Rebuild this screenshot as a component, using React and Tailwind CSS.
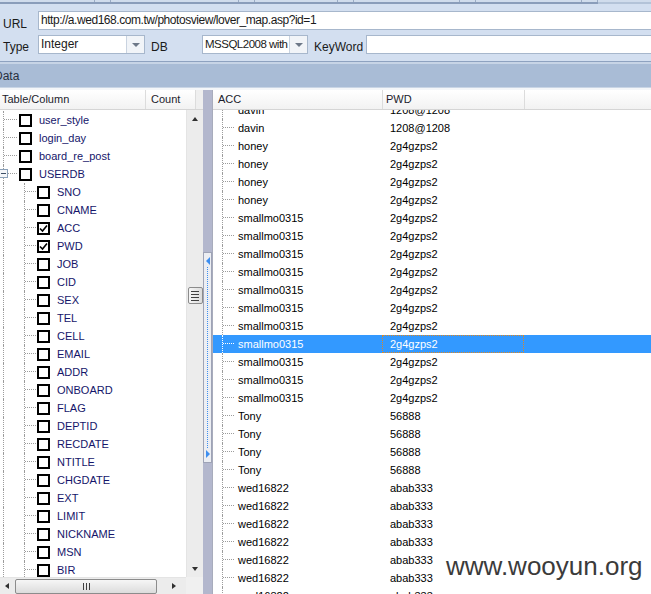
import React from 'react';

const USERDB_COLUMNS = [
    'SNO', 'CNAME', 'ACC', 'PWD', 'JOB', 'CID', 'SEX', 'TEL', 'CELL', 'EMAIL', 'ADDR',
    'ONBOARD', 'FLAG', 'DEPTID', 'RECDATE', 'NTITLE', 'CHGDATE', 'EXT', 'LIMIT',
    'NICKNAME', 'MSN', 'BIR'
];
const CHECKED = ['ACC', 'PWD'];

const ROWS = [
    ['davin', '1208@1208'],
    ['davin', '1208@1208'],
    ...Array(4).fill(['honey', '2g4gzps2']),
    ...Array(11).fill(['smallmo0315', '2g4gzps2']),
    ...Array(4).fill(['Tony', '56888']),
    ...Array(7).fill(['wed16822', 'abab333'])
];
const SELECTED = 13;

function Checkbox({ checked }) {
    return (
        <div className="flex h-[13px] w-[13px] items-center justify-center border-2 border-black bg-white">
            {checked && (
                <svg width="9" height="9" viewBox="0 0 9 9">
                    <path d="M1 4.5 L3.5 7 L8 1.5" fill="none" stroke="#000" strokeWidth="1.6" />
                </svg>
            )}
        </div>
    );
}

function Dropdown({ value, className, tight }) {
    return (
        <div className={`flex h-[19px] border border-[#a7b7cc] bg-white ${className}`}>
            <div
                className={`flex-1 overflow-hidden whitespace-nowrap pl-[2px] leading-[17px] ${
                    tight ? 'text-[11.5px] tracking-[-0.5px]' : ''
                }`}
            >
                {value}
            </div>
            <div className="flex w-[18px] items-center justify-center border-l border-[#c9d3e0] bg-[#f1f4f8]">
                <span className="h-0 w-0 border-x-[4px] border-t-[4px] border-x-transparent border-t-[#6d7888]" />
            </div>
        </div>
    );
}

function TopRow({ label, checked, expander }) {
    return (
        <div className="flex h-[18px]">
            <div className="w-[3px]" />
            <div className="relative w-[14px] border-l border-dotted border-[#9c9c9c]">
                <div className="h-[9px] border-b border-dotted border-[#9c9c9c]" />
                {expander && (
                    <div className="absolute -left-[5px] top-[4px] flex h-[9px] w-[9px] items-center justify-center border border-[#8aa0b8] bg-[#f4f6f9]">
                        <div className="h-px w-[5px] bg-[#3d4f66]" />
                    </div>
                )}
            </div>
            <div className="flex items-center pl-[2px]">
                <Checkbox checked={checked} />
            </div>
            <span className="ml-[7px] self-center">{label}</span>
        </div>
    );
}

function ChildRow({ label }) {
    return (
        <div className="flex h-[18px]">
            <div className="w-[3px]" />
            <div className="w-[21px] border-l border-dotted border-[#9c9c9c]" />
            <div className="w-[12px] border-l border-dotted border-[#9c9c9c]">
                <div className="h-[9px] border-b border-dotted border-[#9c9c9c]" />
            </div>
            <div className="flex items-center pl-px">
                <Checkbox checked={CHECKED.includes(label)} />
            </div>
            <span className="ml-[7px] self-center">{label}</span>
        </div>
    );
}

function GridRow({ acc, pwd, selected }) {
    const line = selected ? 'border-white' : 'border-[#9c9c9c]';
    return (
        <div className={`flex h-[18px] ${selected ? 'bg-[#3399ff] text-white' : 'text-black'}`}>
            <div className="w-[9px]" />
            <div className={`w-[12px] border-l border-dotted ${line}`}>
                <div className={`h-[9px] border-b border-dotted ${line}`} />
            </div>
            <div className="flex w-[148px] items-center pl-[4px]">{acc}</div>
            <div
                className={`flex w-[142px] items-center pl-[7px] ${
                    selected ? 'border border-dotted border-[#e0871f]' : 'border border-transparent'
                }`}
            >
                {pwd}
            </div>
        </div>
    );
}

export default function App() {
    return (
        <div className="relative flex h-[594px] w-[651px] flex-col overflow-hidden bg-white font-['Liberation_Sans',Arial,sans-serif] text-[12px] text-[#1a1a1a]">
            {/* window strip */}
            <div className="flex h-[2px] bg-[#d0dcec]">
                <div className="w-[95px] border-r border-[#9aabc4]" />
                <div className="w-[16px] border-r border-[#9aabc4]" />
                <div className="w-[128px] border-r border-[#9aabc4]" />
                <div className="w-[16px] border-r border-[#9aabc4]" />
                <div className="w-[83px] border-r border-[#9aabc4]" />
                <div className="w-[16px] border-r border-[#9aabc4]" />
                <div className="w-[106px] border-r border-[#9aabc4]" />
                <div className="w-[16px] border-r border-[#9aabc4]" />
                <div className="w-[106px] border-r border-[#9aabc4]" />
                <div className="w-[16px] border-r border-[#9aabc4]" />
            </div>
            <div className="flex h-[2px]">
                <div className="w-[598px] bg-[#8a9dba]" />
                <div className="flex-1 bg-[#b3c3d8]" />
            </div>

            {/* connection panel */}
            <div className="flex flex-col gap-[5px] bg-[#d3dff0] px-[3px] pb-[7px] pt-[7px]">
                <div className="flex h-[19px] items-start">
                    <span className="w-[35px] pt-[6px] leading-[14px]">URL</span>
                    <div className="-mr-[6px] h-[19px] flex-1 border border-[#a7b7cc] bg-white pl-[2px] leading-[17px] tracking-[-0.45px]">
                        http://a.wed168.com.tw/photosview/lover_map.asp?id=1
                    </div>
                </div>
                <div className="flex h-[19px] items-start">
                    <span className="w-[35px] pt-[5px] leading-[14px]">Type</span>
                    <Dropdown value="Integer" className="w-[107px]" />
                    <span className="ml-[6px] w-[51px] pt-[5px] leading-[14px]">DB</span>
                    <Dropdown value="MSSQL2008 with Error" className="w-[106px]" tight />
                    <span className="ml-[6px] w-[52px] pt-[5px] leading-[14px]">KeyWord</span>
                    <div className="-mr-[6px] h-[19px] flex-1 border border-[#a7b7cc] bg-white" />
                </div>
            </div>
            <div className="h-px bg-[#8ea2c0]" />
            <div className="h-[2px] bg-[#c7d4e6]" />

            {/* Data bar */}
            <div className="flex h-[23px] items-end bg-[#a9bcd6] pb-[2px] text-[#283040]">
                <span className="-ml-[6px] leading-[18px]">Data</span>
            </div>
            <div className="h-[3px] border-t border-[#c9d5e5] bg-[#f4f6f9]" />

            {/* main area */}
            <div className="flex min-h-0 flex-1 text-[11px]">
                {/* left: tables */}
                <div className="flex w-[203px] flex-col">
                    <div className="flex h-[20px] border-b border-[#d5d5d5] bg-gradient-to-b from-white to-[#f2f2f2] text-[#1c1c2c]">
                        <div className="flex w-[146px] items-center border-r border-[#dcdcdc] pl-[2px]">Table/Column</div>
                        <div className="flex w-[50px] items-center border-r border-[#dcdcdc] pl-[5px]">Count</div>
                        <div className="flex-1 bg-[#efefef]" />
                    </div>
                    <div className="flex min-h-0 flex-1">
                        <div className="flex-1 overflow-hidden pt-px text-[#15156a]">
                            <TopRow label="user_style" />
                            <TopRow label="login_day" />
                            <TopRow label="board_re_post" />
                            <TopRow label="USERDB" expander />
                            {USERDB_COLUMNS.map((c) => (
                                <ChildRow key={c} label={c} />
                            ))}
                        </div>
                        <div className="flex w-[17px] flex-col border-l border-[#e4e4e4] bg-[#ececec]">
                            <div className="flex h-[17px] items-center justify-center">
                                <span className="h-0 w-0 border-x-[3.5px] border-b-[4px] border-x-transparent border-b-[#303030]" />
                            </div>
                            <div className="flex-1">
                                <div className="mx-auto mt-[160px] flex h-[17px] w-[15px] flex-col items-center justify-center gap-[2px] rounded-[2px] border border-[#8c8c8c] bg-gradient-to-r from-[#f6f6f6] to-[#dcdcdc]">
                                    <div className="h-px w-[8px] bg-[#404040]" />
                                    <div className="h-px w-[8px] bg-[#404040]" />
                                    <div className="h-px w-[8px] bg-[#404040]" />
                                    <div className="h-px w-[8px] bg-[#404040]" />
                                </div>
                            </div>
                            <div className="flex h-[17px] items-center justify-center">
                                <span className="h-0 w-0 border-x-[3.5px] border-t-[4px] border-x-transparent border-t-[#303030]" />
                            </div>
                        </div>
                    </div>
                    <div className="flex h-[17px]">
                        <div className="flex w-[186px] items-center border-t border-[#e4e4e4] bg-[#ececec]">
                            <div className="flex w-[13px] justify-center">
                                <span className="h-0 w-0 border-y-[3.5px] border-r-[4px] border-y-transparent border-r-[#303030]" />
                            </div>
                            <div className="ml-[2px] flex h-[15px] w-[142px] items-center justify-center rounded-[2px] border border-[#8c8c8c] bg-gradient-to-b from-[#f6f6f6] to-[#dcdcdc]">
                                <div className="flex gap-[2px]">
                                    <div className="h-[7px] w-px bg-[#404040]" />
                                    <div className="h-[7px] w-px bg-[#404040]" />
                                    <div className="h-[7px] w-px bg-[#404040]" />
                                </div>
                            </div>
                            <div className="flex flex-1 justify-center pl-[4px]">
                                <span className="h-0 w-0 border-y-[3.5px] border-l-[4px] border-y-transparent border-l-[#303030]" />
                            </div>
                        </div>
                        <div className="flex-1 bg-[#f0f0f0]" />
                    </div>
                </div>

                {/* splitter */}
                <div className="flex w-[9px] flex-col bg-[#b3b7cd]">
                    <div className="h-[162px]" />
                    <div className="flex h-[211px] flex-col items-center border border-[#9ea3b6] bg-[#eceef3] py-[4px]">
                        <span className="h-0 w-0 border-y-[4px] border-r-[4px] border-y-transparent border-r-[#3d8ef0]" />
                        <div className="my-[2px] flex-1 border-l border-dotted border-[#3d8ef0]" />
                        <span className="h-0 w-0 border-y-[4px] border-l-[4px] border-y-transparent border-l-[#3d8ef0]" />
                    </div>
                    <div className="flex-1" />
                </div>

                {/* right: data grid */}
                <div className="flex min-w-0 flex-1 flex-col border-l border-[#a8acbc]">
                    <div className="relative z-10 flex h-[20px] border-b border-[#d5d5d5] bg-gradient-to-b from-white to-[#f2f2f2] text-[#1c1c2c]">
                        <div className="flex w-[170px] items-center border-r border-[#dcdcdc] pl-[5px]">ACC</div>
                        <div className="flex w-[142px] items-center border-r border-[#dcdcdc] pl-[3px]">PWD</div>
                        <div className="flex-1" />
                    </div>
                    <div className="min-h-0 flex-1 overflow-hidden">
                        <div className="-mt-[9px]">
                            {ROWS.map(([acc, pwd], i) => (
                                <GridRow key={i} acc={acc} pwd={pwd} selected={i === SELECTED} />
                            ))}
                        </div>
                    </div>
                </div>
            </div>

            <div className="absolute left-[446px] top-[551px] text-[26px] leading-[30px] text-[#3b3b3b]">www.wooyun.org</div>
        </div>
    );
}
